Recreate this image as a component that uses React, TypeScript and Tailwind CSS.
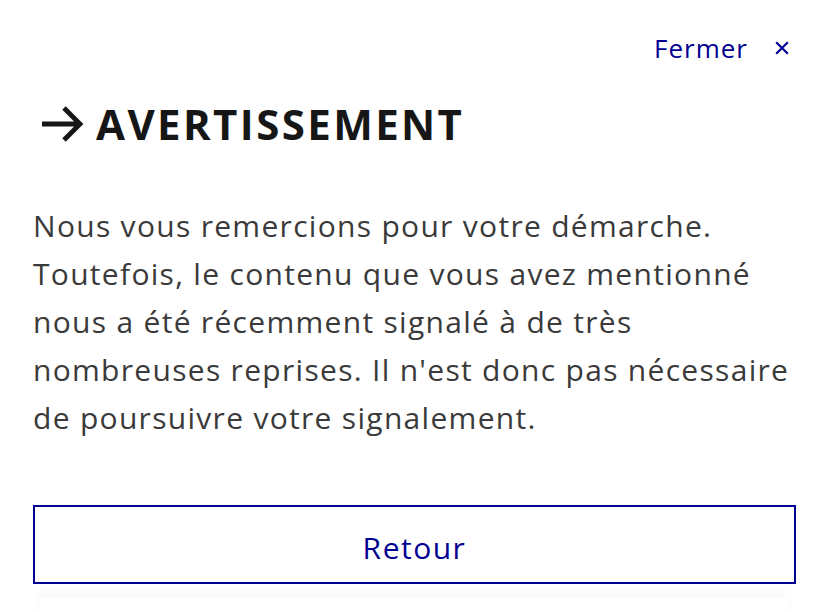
const CloseIcon = () => (
    <svg width="20" height="20" viewBox="0 0 24 24" fill="none" stroke="currentColor" strokeWidth="2.6">
        <path d="M5 5l14 14M19 5L5 19" />
    </svg>
);

const ArrowIcon = () => (
    <svg width="48" height="48" viewBox="0 0 24 24" fill="none" stroke="currentColor" strokeWidth="2.4">
        <path d="M2 12h19M13 4l8 8-8 8" />
    </svg>
);

export default function App() {
    return (
        <div className="min-h-[612px] w-[828px] bg-white font-['Open_Sans',sans-serif] overflow-hidden">
            <div className="flex justify-end pt-[30px] pr-[36px]">
                <button className="flex items-center gap-[24px] text-[26px] leading-[36px] tracking-[1px] text-[#000091]">
                    Fermer
                    <CloseIcon />
                </button>
            </div>
            <div className="px-[33px]">
                <h1 className="mt-[32px] flex items-center gap-[10px] text-[42px] leading-[52px] font-bold tracking-[2.4px] text-[#161616]">
                    <span className="flex items-center text-[#161616] ml-[5px]"><ArrowIcon /></span>
                    AVERTISSEMENT
                </h1>
                <p className="mt-[52px] text-[30px] leading-[48px] tracking-[1.3px] text-[#3a3a3a] whitespace-nowrap">
                    Nous vous remercions pour votre démarche.<br />
                    Toutefois, le contenu que vous avez mentionné<br />
                    nous a été récemment signalé à de très<br />
                    nombreuses reprises. Il n'est donc pas nécessaire<br />
                    de poursuivre votre signalement.
                </p>
                <button className="mt-[63px] w-[763px] h-[79px] pt-[5px] border-2 border-[#000091] text-[#000091] text-[30px] tracking-[1.5px]">
                    Retour
                </button>
            </div>
            <div className="mt-[14px] h-[20px] mx-[40px] shadow-[0_-6px_10px_rgba(0,0,0,0.03)]" />
        </div>
    );
}
